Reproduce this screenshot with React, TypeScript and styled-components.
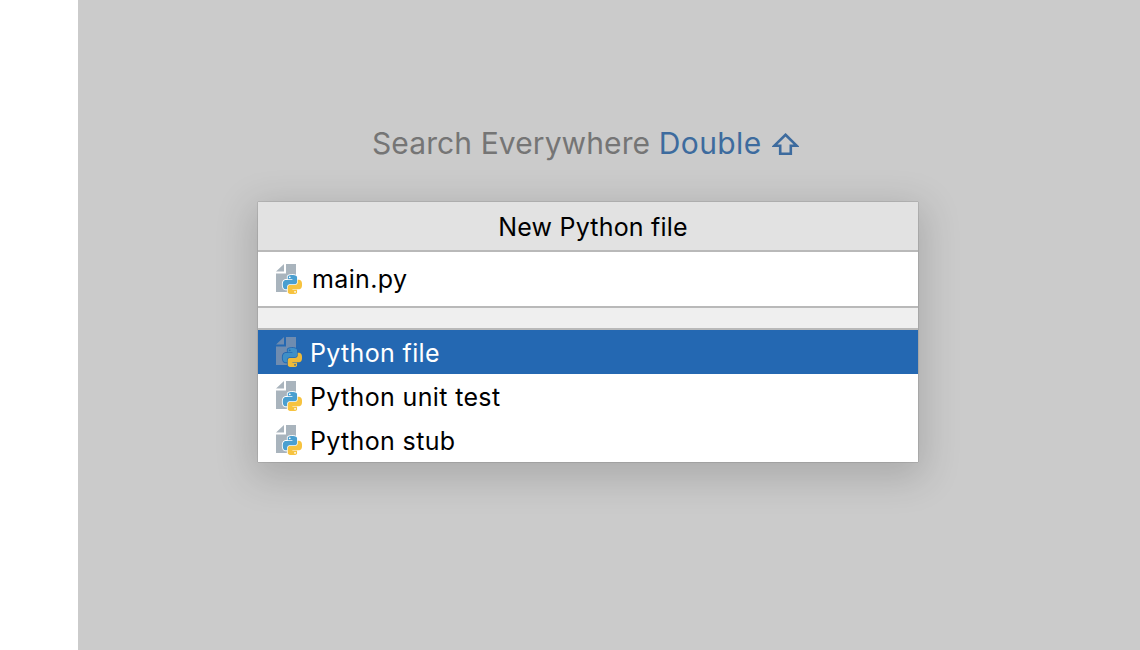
import React from "react";
import styled, { createGlobalStyle } from "styled-components";

const items = [
  { label: "Python file", selected: true },
  { label: "Python unit test", selected: false },
  { label: "Python stub", selected: false },
];

const snakeBlue =
  "M14.25.18l.9.2.73.26.59.3.45.32.34.34.25.34.16.33.1.3.04.26.02.2-.01.13V8.5l-.05.63-.13.55-.21.46-.26.38-.3.31-.33.25-.35.19-.35.14-.33.1-.3.07-.26.04-.21.02H8.77l-.69.05-.59.14-.5.22-.41.27-.33.32-.27.35-.2.36-.15.37-.1.35-.07.32-.04.27-.02.21v3.06H3.17l-.21-.03-.28-.07-.32-.12-.35-.18-.36-.26-.36-.36-.35-.46-.32-.59-.28-.73-.21-.88-.14-1.05-.05-1.23.06-1.22.16-1.04.24-.87.32-.71.36-.57.4-.44.42-.33.42-.24.4-.16.36-.1.32-.05.24-.01h.16l.06.01h8.16v-.83H6.18l-.01-2.75-.02-.37.05-.34.11-.31.17-.28.25-.26.31-.23.38-.2.44-.18.51-.15.58-.12.64-.1.71-.06.77-.04.84-.02 1.27.05zM7.95 2.16l-.23.33-.08.41.08.41.23.34.33.22.41.09.41-.09.33-.22.23-.34.08-.41-.08-.41-.23-.33-.33-.22-.41-.09-.41.09z";
const snakeYellow =
  "M21.04 6.11l.28.06.32.12.35.18.36.27.36.35.35.47.32.59.28.73.21.88.14 1.04.05 1.23-.06 1.23-.16 1.04-.24.86-.32.71-.36.57-.4.45-.42.33-.42.24-.4.16-.36.09-.32.05-.24.02-.16-.01h-8.22v.82h5.84l.01 2.76.02.36-.05.34-.11.31-.17.29-.25.25-.31.24-.38.2-.44.17-.51.15-.58.13-.64.09-.71.07-.77.04-.84.01-1.27-.04-1.07-.14-.9-.2-.73-.25-.59-.3-.45-.33-.34-.34-.25-.34-.16-.33-.1-.3-.04-.25-.02-.2.01-.13v-5.34l.05-.64.13-.54.21-.46.26-.38.3-.32.33-.24.35-.2.35-.14.33-.1.3-.06.26-.04.21-.02.13-.01h5.84l.69-.05.59-.14.5-.21.41-.28.33-.32.27-.35.2-.36.15-.36.1-.35.07-.32.04-.28.02-.21V6.07h2.09l.14.01zM14.57 20.36l-.23.33-.08.41.08.41.23.33.33.23.41.08.41-.08.33-.23.23-.33.08-.41-.08-.41-.23-.33-.33-.23-.41-.08-.41.08z";

const PythonFileIcon = ({ selected }: { selected?: boolean }) => {
  const sheet = selected ? "#6f8cb0" : "#a9b4bd";
  const halo = selected ? "#2468b2" : "#fff";
  return (
    <IconSvg viewBox="0 0 26 30" width="26" height="30">
      <path d="M0 7.5 L8 0 V7.5 Z M10 0 H20 V28 H0 V9.5 H10 Z" fill={sheet} />
      <g transform="translate(6.8 11) scale(0.8)">
        <path d={snakeBlue} fill={halo} stroke={halo} strokeWidth="2.2" />
        <path d={snakeYellow} fill={halo} stroke={halo} strokeWidth="2.2" />
        <path d={snakeBlue} fill={selected ? "#3f8fc6" : "#4a9fd0"} />
        <path d={snakeYellow} fill={selected ? "#eeba3a" : "#f7c33f"} />
      </g>
    </IconSvg>
  );
};

export default function App() {
  return (
    <Page>
      <GlobalStyle />
      <Sidebar />
      <Editor>
        <Hint>
          Search Everywhere <Shortcut>Double</Shortcut>
          <ShiftIcon viewBox="0 0 27 22" width="27" height="22">
            <path
              d="M13.5 1.8 L24.8 12.8 H18.8 V20.7 H8.2 V12.8 H2.2 Z"
              fill="none"
              stroke="#3d6b9e"
              strokeWidth="2.6"
            />
          </ShiftIcon>
        </Hint>
        <Dialog>
          <Title>New Python file</Title>
          <NameRow>
            <PythonFileIcon />
            <NameText>main.py</NameText>
          </NameRow>
          <Spacer />
          <List>
            {items.map((item) => (
              <ListItem key={item.label} $selected={item.selected}>
                <PythonFileIcon selected={item.selected} />
                <ItemText>{item.label}</ItemText>
              </ListItem>
            ))}
          </List>
        </Dialog>
      </Editor>
    </Page>
  );
}

const GlobalStyle = createGlobalStyle`
  html, body {
    margin: 0;
    padding: 0;
    background: #fff;
  }
  body {
    font-family: Inter, "Open Sans", "Liberation Sans", sans-serif;
  }
`;

const Page = styled.div`
  display: flex;
  width: 1140px;
  height: 650px;
  overflow: hidden;
`;
const Sidebar = styled.div`
  width: 78px;
  flex: none;
  background: #fff;
`;
const Editor = styled.div`
  flex: 1;
  background: #cbcbcb;
  padding: 124px 0 0 180px;
  box-sizing: border-box;
`;
const Hint = styled.div`
  display: flex;
  align-items: center;
  height: 38px;
  margin-left: 114px;
  font-size: 30px;
  letter-spacing: 0.1px;
  line-height: 36px;
  color: #757575;
  white-space: pre;
`;
const Shortcut = styled.span`
  color: #3d6b9e;
  letter-spacing: 0.4px;
`;
const ShiftIcon = styled.svg`
  margin-left: 10px;
  margin-top: 1px;
  flex: none;
`;
const Dialog = styled.div`
  width: 660px;
  margin-top: 40px;
  background: #fff;
  box-shadow: 0 0 1px 0 rgba(0, 0, 0, 0.5), 0 10px 36px 6px rgba(0, 0, 0, 0.16);
`;
const Title = styled.div`
  height: 48px;
  line-height: 51px;
  padding-left: 10px;
  text-align: center;
  font-size: 25px;
  letter-spacing: 0.2px;
  color: #000;
  background: #e2e2e2;
  border-bottom: 2px solid #b9b9b9;
`;
const NameRow = styled.div`
  display: flex;
  align-items: center;
  gap: 10px;
  height: 54px;
  padding-left: 18px;
  font-size: 25px;
  background: #fff;
`;
const NameText = styled.span`
  color: #000;
  letter-spacing: 0.35px;
`;
const Spacer = styled.div`
  height: 20px;
  background: #efefef;
  border-top: 2px solid #b9b9b9;
  border-bottom: 2px solid #b9b9b9;
`;
const List = styled.div`
  display: flex;
  flex-direction: column;
`;
const ListItem = styled.div<{ $selected: boolean }>`
  display: flex;
  align-items: center;
  gap: 8px;
  height: 44px;
  padding-left: 18px;
  font-size: 25px;
  letter-spacing: 0.35px;
  color: ${({ $selected }) => ($selected ? "#fff" : "#000")};
  background: ${({ $selected }) => ($selected ? "#2468b2" : "#fff")};
`;
const ItemText = styled.span`
  padding-top: 2px;
`;
const IconSvg = styled.svg`
  flex: none;
`;
